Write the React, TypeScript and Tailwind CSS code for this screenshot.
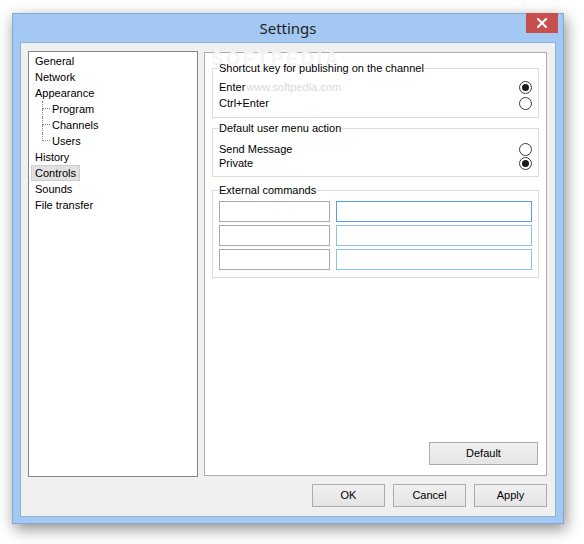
import React from "react";

const font = { fontFamily: '"Liberation Sans", Arial, sans-serif' };

function Radio({ on }: { on?: boolean }) {
  return (
    <span className="w-[13px] h-[13px] rounded-full border border-[#3c3c3c] bg-white flex items-center justify-center shrink-0">
      {on && <span className="w-[7px] h-[7px] rounded-full bg-[#1b1b1b]" />}
    </span>
  );
}

function Btn({ label, w = "w-[73px]" }: { label: string; w?: string }) {
  return (
    <div
      className={`${w} h-[23px] border border-[#acacac] bg-gradient-to-b from-[#f0f0f0] to-[#e5e5e5] flex items-center justify-center text-[11px] text-black`}
    >
      {label}
    </div>
  );
}

function TreeItem({ label, selected }: { label: string; selected?: boolean }) {
  return (
    <div className="h-[16px] flex items-center pl-[2px]">
      <span
        className={`h-[16px] flex items-center pl-[3px] pr-[3px] border ${
          selected ? "bg-[#e1e1e1] border-[#cdcdcd]" : "border-transparent"
        }`}
      >
        {label}
      </span>
    </div>
  );
}

function SubItem({ label, last }: { label: string; last?: boolean }) {
  return (
    <div className="h-[16px] flex items-stretch pl-[13px]">
      <div className="w-[8px] flex flex-col">
        <div className="h-[8px] border-l border-b border-dotted border-[#8c8c8c]" />
        <div className={`flex-1 ${last ? "" : "border-l border-dotted border-[#8c8c8c]"}`} />
      </div>
      <span className="flex items-center pl-[2px]">{label}</span>
    </div>
  );
}

export default function App() {
  return (
    <div className="w-[584px] h-[544px] bg-white overflow-hidden pl-[12px] pt-[13px]" style={font}>
      <div className="w-[552px] h-[511px] border border-[#86a9d4] bg-[#a3c9f3] flex flex-col relative shadow-[2px_5px_14px_rgba(0,0,0,0.45)]">
        {/* Title bar */}
        <div className="h-[28px] flex items-center justify-center relative">
          <span
            className="text-[15px] text-[#1e1e1e] leading-none"
            style={{ fontFamily: '"Noto Sans", "Open Sans", sans-serif' }}
          >
            Settings
          </span>
          <div className="absolute top-[-1px] right-[5px] w-[32px] h-[20px] bg-[#c7504f] flex items-center justify-center">
            <svg width="10" height="10" viewBox="0 0 10 10">
              <path d="M1 1L9 9M9 1L1 9" stroke="white" strokeWidth="2" strokeLinecap="square" />
            </svg>
          </div>
        </div>

        {/* Client */}
        <div className="mx-[7px] mb-[6px] flex-1 border border-[#8fb2db] bg-[#f0f0f0] flex flex-col pl-[7px] pr-[8px] pt-[8px]">
          <div className="flex gap-[6px]">
            {/* Tree */}
            <div className="w-[170px] h-[426px] border border-[#828790] bg-white pt-[1px] text-[11px] text-black">
              <TreeItem label="General" />
              <TreeItem label="Network" />
              <TreeItem label="Appearance" />
              <SubItem label="Program" />
              <SubItem label="Channels" />
              <SubItem label="Users" last />
              <TreeItem label="History" />
              <TreeItem label="Controls" selected />
              <TreeItem label="Sounds" />
              <TreeItem label="File transfer" />
            </div>

            {/* Panel */}
            <div className="relative mt-[1px] w-[343px] h-[424px] border border-[#adadad] bg-white flex flex-col px-[7px] pt-[8px] pb-[10px] text-[11px] text-black">
              <span className="absolute left-[6px] top-[-3px] text-[18px] font-bold tracking-[3px] text-[#f4f4f4] leading-none select-none">
                SOFTPEDIA
              </span>

              <fieldset className="relative border border-[#dcdcdc] px-[6px] m-0">
                <legend className="p-0 leading-[14px]">Shortcut key for publishing on the channel</legend>
                <div className="pt-[4px] pb-[6px]">
                  <div className="h-[16px] flex items-center justify-between">
                    <span className="flex items-center">
                      Enter
                      <span className="ml-[1px] text-[11px] text-[#d9d9d9]">www.softpedia.com</span>
                    </span>
                    <Radio on />
                  </div>
                  <div className="h-[16px] flex items-center justify-between">
                    <span>Ctrl+Enter</span>
                    <Radio />
                  </div>
                </div>
              </fieldset>

              <fieldset className="mt-[3px] border border-[#dcdcdc] px-[6px] m-0">
                <legend className="p-0 leading-[14px]">Default user menu action</legend>
                <div className="pt-[7px] pb-[6px]">
                  <div className="h-[14px] flex items-center justify-between">
                    <span>Send Message</span>
                    <Radio />
                  </div>
                  <div className="h-[14px] flex items-center justify-between">
                    <span>Private</span>
                    <Radio on />
                  </div>
                </div>
              </fieldset>

              <fieldset className="mt-[6px] border border-[#dcdcdc] px-[6px] m-0">
                <legend className="p-0 leading-[14px]">External commands</legend>
                <div className="pt-[4px] pb-[7px] flex flex-col gap-[3px]">
                  {[0, 1, 2].map((i) => (
                    <div key={i} className="flex gap-[6px]">
                      <div className="w-[111px] h-[21px] border border-[#ababab] bg-white" />
                      <div
                        className={`w-[196px] h-[21px] border bg-white ${
                          i === 0 ? "border-[#5a9fe4]" : "border-[#8ec0f0]"
                        }`}
                      />
                    </div>
                  ))}
                </div>
              </fieldset>

              <div className="flex-1" />
              <div className="self-end mr-[1px]">
                <Btn label="Default" w="w-[109px]" />
              </div>
            </div>
          </div>

          <div className="mt-[7px] flex justify-end gap-[8px]">
            <Btn label="OK" />
            <Btn label="Cancel" />
            <Btn label="Apply" />
          </div>
        </div>
      </div>
    </div>
  );
}
